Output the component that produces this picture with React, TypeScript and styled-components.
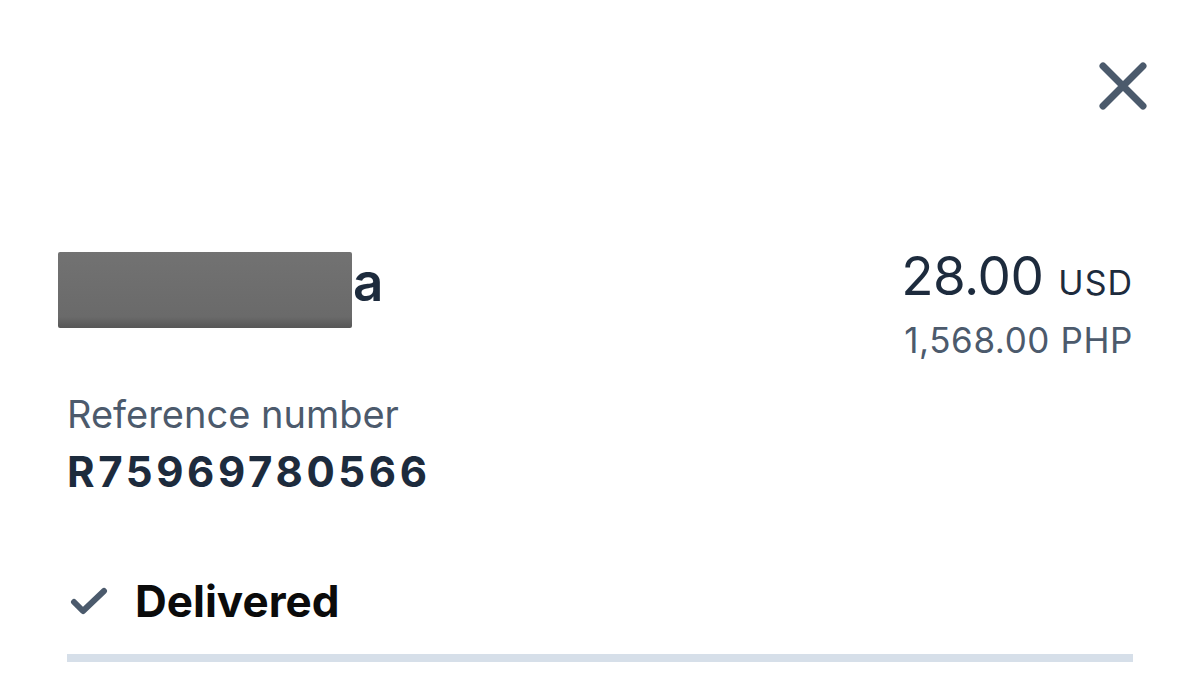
import React from "react";
import styled, { createGlobalStyle } from "styled-components";

const Global = createGlobalStyle`
  html, body { margin: 0; padding: 0; background: #ffffff; }
  body { font-family: Inter, "Noto Sans", "Liberation Sans", sans-serif; }
`;

const Page = styled.div`
  width: 1200px;
  height: 674px;
  box-sizing: border-box;
  padding: 0 67px 0 67px;
  display: flex;
  flex-direction: column;
  overflow: hidden;
`;

const TopBar = styled.div`
  display: flex;
  justify-content: flex-end;
  padding-top: 60px;
  margin-right: -16px;
`;

const CloseButton = styled.button`
  width: 52px;
  height: 52px;
  padding: 0;
  border: none;
  background: none;
  display: flex;
  align-items: center;
  justify-content: center;
  cursor: pointer;
`;

const HeaderRow = styled.div`
  display: flex;
  justify-content: space-between;
  align-items: flex-start;
  margin-top: 138px;
`;

const NameWrap = styled.div`
  display: flex;
  align-items: flex-start;
  margin-left: -9px;
  padding-top: 2px;
`;

const Redaction = styled.div`
  width: 294px;
  height: 76px;
  background: linear-gradient(180deg, #727272 0%, #6a6a6a 85%, #575757 100%);
  border-radius: 2px;
`;

const NameTail = styled.span`
  font-size: 53px;
  font-weight: 600;
  color: #1d2b3d;
  line-height: 1;
  margin-top: 4px;
  margin-left: 1px;
`;

const Amounts = styled.div`
  display: flex;
  flex-direction: column;
  align-items: flex-end;
`;

const Primary = styled.div`
  display: flex;
  align-items: baseline;
  gap: 15px;
  color: #1d2b3d;
  line-height: 1;
`;

const BigAmount = styled.span`
  font-size: 53px;
  font-weight: 400;
  letter-spacing: -0.5px;
`;

const Currency = styled.span`
  font-size: 34px;
  font-weight: 400;
  letter-spacing: 1px;
`;

const Secondary = styled.div`
  font-size: 35px;
  color: #4c5a6c;
  margin-top: 20px;
  line-height: 1;
  letter-spacing: 0.6px;
`;

const RefLabel = styled.div`
  font-size: 38px;
  color: #4c5a6c;
  margin-top: 37px;
  line-height: 1;
`;

const RefValue = styled.div`
  font-size: 42px;
  font-weight: 700;
  color: #1d2b3d;
  letter-spacing: 3.6px;
  margin-top: 18px;
  line-height: 1;
`;

const StatusRow = styled.div`
  display: flex;
  align-items: center;
  gap: 27px;
  margin-top: 86px;
  padding-left: 3px;
`;

const StatusText = styled.span`
  font-size: 44px;
  font-weight: 700;
  color: #0b0b0b;
  line-height: 1;
`;

const Progress = styled.div`
  height: 8px;
  background: #d6dfe9;
  margin-top: 31px;
`;

export default function App() {
  return (
    <>
      <Global />
      <Page>
        <TopBar>
          <CloseButton aria-label="Close">
            <svg width="52" height="52" viewBox="0 0 52 52">
              <path d="M6 6 L46 46 M46 6 L6 46" stroke="#4b5a6c" strokeWidth="7" strokeLinecap="round" />
            </svg>
          </CloseButton>
        </TopBar>
        <HeaderRow>
          <NameWrap>
            <Redaction />
            <NameTail>a</NameTail>
          </NameWrap>
          <Amounts>
            <Primary>
              <BigAmount>28.00</BigAmount>
              <Currency>USD</Currency>
            </Primary>
            <Secondary>1,568.00 PHP</Secondary>
          </Amounts>
        </HeaderRow>
        <RefLabel>Reference number</RefLabel>
        <RefValue>R75969780566</RefValue>
        <StatusRow>
          <svg width="38" height="30" viewBox="0 0 38 30">
            <path d="M4 16 L13 25 L34 5" stroke="#4b5a6c" strokeWidth="6" fill="none" strokeLinecap="round" strokeLinejoin="round" />
          </svg>
          <StatusText>Delivered</StatusText>
        </StatusRow>
        <Progress />
      </Page>
    </>
  );
}
